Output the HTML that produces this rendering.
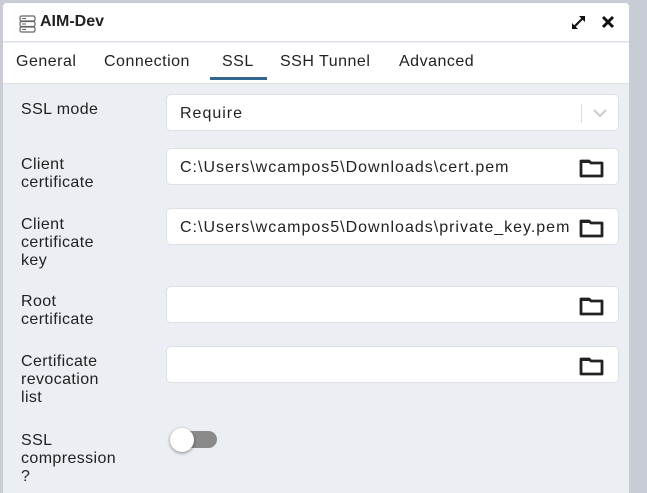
<!DOCTYPE html>
<html><head><style>
*{box-sizing:border-box;margin:0;padding:0}
body{width:647px;height:487px;overflow:hidden;background:#c8ccd4;font-family:"Liberation Sans",sans-serif;color:#222;position:relative}
.dlg{position:absolute;left:3px;top:3px;width:626px;height:490px;background:#ebeef3;border-radius:4px 4px 0 0;overflow:hidden}
.hdr{position:absolute;left:0;top:0;width:626px;height:39px;background:#fff;border-bottom:1px solid #dde0e6}
.title{position:absolute;left:37px;top:10px;font-size:16px;font-weight:bold;color:#222}
.tabs{position:absolute;left:0;top:40px;width:626px;height:41px;background:#fff;border-bottom:1px solid #dde0e6}
.tab{position:absolute;top:10px;font-size:16px;color:#222;letter-spacing:0.5px}
.ul{position:absolute;left:207px;top:34px;width:57px;height:3px;background:#326690}
.lbl{position:absolute;left:18px;font-size:16px;line-height:18px;color:#222;letter-spacing:0.4px}
.inp{position:absolute;left:163px;width:453px;height:37px;background:#fff;border:1px solid #dde0e6;border-radius:5px;font-size:16px;padding:10px 0 0 13px;color:#222;white-space:nowrap;letter-spacing:1px}
.fold{position:absolute;right:13px;top:9px}
</style></head><body>
<div class="dlg">
<div class="hdr">
<svg style="position:absolute;left:16px;top:12px" width="17" height="18" viewBox="0 0 17 18"><g fill="#fff" stroke="#666" stroke-width="1.2"><rect x="1" y="1" width="15" height="5" rx="1.5"/><rect x="1" y="6.5" width="15" height="5" rx="1.5"/><rect x="1" y="12" width="15" height="5" rx="1.5"/></g><g stroke="#666"><line x1="3" y1="3.5" x2="7" y2="3.5"/><line x1="3" y1="9" x2="7" y2="9"/><line x1="3" y1="14.5" x2="7" y2="14.5"/></g></svg>
<div class="title">AIM-Dev</div>
<svg style="position:absolute;left:567px;top:11px" width="17" height="17" viewBox="0 0 17 17"><g stroke="#111" stroke-width="2"><line x1="3" y1="14" x2="14" y2="3"/></g><path d="M9 2h6v6z M2 9v6h6z" fill="#111"/></svg>
<svg style="position:absolute;left:598px;top:12px" width="14" height="14" viewBox="0 0 14 14"><g stroke="#111" stroke-width="3"><line x1="2" y1="2" x2="12" y2="12"/><line x1="12" y1="2" x2="2" y2="12"/></g></svg>
</div>
<div class="tabs">
<div class="tab" style="left:13px">General</div>
<div class="tab" style="left:101px">Connection</div>
<div class="tab" style="left:219px">SSL</div>
<div class="tab" style="left:277px">SSH Tunnel</div>
<div class="tab" style="left:396px">Advanced</div>
<div class="ul"></div>
</div>
<div class="lbl" style="top:98px">SSL mode</div>
<div class="inp" style="top:91px">Require
<div style="position:absolute;left:414px;top:9px;width:1px;height:19px;background:#ddd"></div>
<svg style="position:absolute;left:425px;top:13px" width="16" height="10" viewBox="0 0 16 10"><path d="M2 2l6 6 6-6" fill="none" stroke="#ccc" stroke-width="2"/></svg></div>

<div class="lbl" style="top:153px">Client<br>certificate</div>
<div class="inp" style="top:145px">C:\Users\wcampos5\Downloads\cert.pem<svg class="fold" width="26" height="20" viewBox="0 0 26 20"><path d="M2 3h8l2 2h11v13H2z" fill="none" stroke="#222" stroke-width="2.8" stroke-linejoin="round"/><path d="M2 3h8l2 2H2z" fill="#222"/></svg></div>

<div class="lbl" style="top:213px">Client<br>certificate<br>key</div>
<div class="inp" style="top:205px">C:\Users\wcampos5\Downloads\private_key.pem<svg class="fold" width="26" height="20" viewBox="0 0 26 20" style="background:#fff"><path d="M2 3h8l2 2h11v13H2z" fill="none" stroke="#222" stroke-width="2.8" stroke-linejoin="round"/><path d="M2 3h8l2 2H2z" fill="#222"/></svg></div>

<div class="lbl" style="top:290px">Root<br>certificate</div>
<div class="inp" style="top:283px"><svg class="fold" width="26" height="20" viewBox="0 0 26 20"><path d="M2 3h8l2 2h11v13H2z" fill="none" stroke="#222" stroke-width="2.8" stroke-linejoin="round"/><path d="M2 3h8l2 2H2z" fill="#222"/></svg></div>

<div class="lbl" style="top:350px">Certificate<br>revocation<br>list</div>
<div class="inp" style="top:343px"><svg class="fold" width="26" height="20" viewBox="0 0 26 20"><path d="M2 3h8l2 2h11v13H2z" fill="none" stroke="#222" stroke-width="2.8" stroke-linejoin="round"/><path d="M2 3h8l2 2H2z" fill="#222"/></svg></div>

<div class="lbl" style="top:429px">SSL<br>compression<br>?</div>
<div style="position:absolute;left:171px;top:428px;width:43px;height:17px;border-radius:9px;background:#8a8a8a"></div>
<div style="position:absolute;left:167px;top:425px;width:24px;height:24px;border-radius:50%;background:#fff;box-shadow:0 1px 3px rgba(0,0,0,.45)"></div>
</div>
</body></html>
